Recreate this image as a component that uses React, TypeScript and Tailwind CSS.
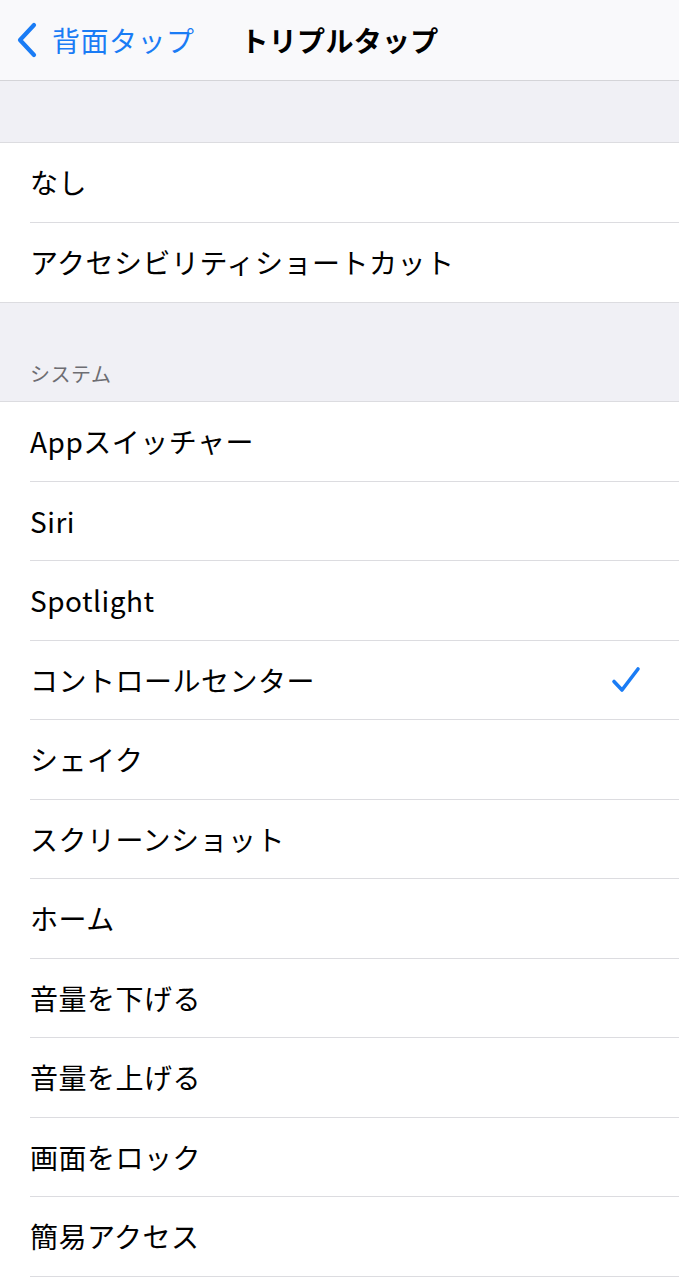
const font = { fontFamily: '"Noto Sans CJK JP", "Noto Sans", sans-serif' };

const topItems = ["なし", "アクセシビリティショートカット"];

const systemItems = [
  "Appスイッチャー",
  "Siri",
  "Spotlight",
  "コントロールセンター",
  "シェイク",
  "スクリーンショット",
  "ホーム",
  "音量を下げる",
  "音量を上げる",
  "画面をロック",
  "簡易アクセス",
];

const selected = "コントロールセンター";

function Row({ label, last }: { label: string; last?: boolean }) {
  return (
    <div className="pl-[30px] bg-white">
      <div
        className={
          "h-[79.5px] flex items-center justify-between pr-[38px] " +
          (last ? "" : "border-b border-[#dcdce0]")
        }
      >
        <span className="text-[28px] text-black tracking-[0.5px]">{label}</span>
        {label === selected && (
          <svg width="30" height="30" viewBox="0 0 30 30" fill="none">
            <path
              d="M3 16.5 L11 25 L27 4"
              stroke="#1a7cf5"
              strokeWidth="3.6"
              strokeLinecap="round"
              strokeLinejoin="round"
            />
          </svg>
        )}
      </div>
    </div>
  );
}

export default function App() {
  return (
    <div className="w-[679px] h-[1280px] bg-white overflow-hidden" style={font}>
      <div className="h-[81px] bg-[#f9f9fb] border-b border-[#d4d4d8] flex items-center">
        <div className="flex items-center pl-[14px]">
          <svg width="26" height="36" viewBox="0 0 26 36" fill="none">
            <path
              d="M20 3 L6 18 L20 33"
              stroke="#1a7cf5"
              strokeWidth="4.2"
              strokeLinecap="round"
              strokeLinejoin="round"
            />
          </svg>
          <span className="ml-[12px] text-[28px] text-[#1a7cf5] tracking-[0.5px]">背面タップ</span>
        </div>
        <span className="ml-[46px] text-[28px] font-bold text-black tracking-[0.3px]">トリプルタップ</span>
      </div>

      <div className="h-[62px] bg-[#f0f0f5] border-b border-[#dcdce0]" />

      {topItems.map((t, i) => (
        <Row key={t} label={t} last={i === topItems.length - 1} />
      ))}

      <div className="h-[100px] bg-[#f0f0f5] border-y border-[#dcdce0] flex items-end pl-[30px] pb-[12px]">
        <span className="text-[20px] text-[#6d6d72] tracking-[0.5px]">システム</span>
      </div>

      {systemItems.map((t) => (
        <Row key={t} label={t} />
      ))}
    </div>
  );
}
